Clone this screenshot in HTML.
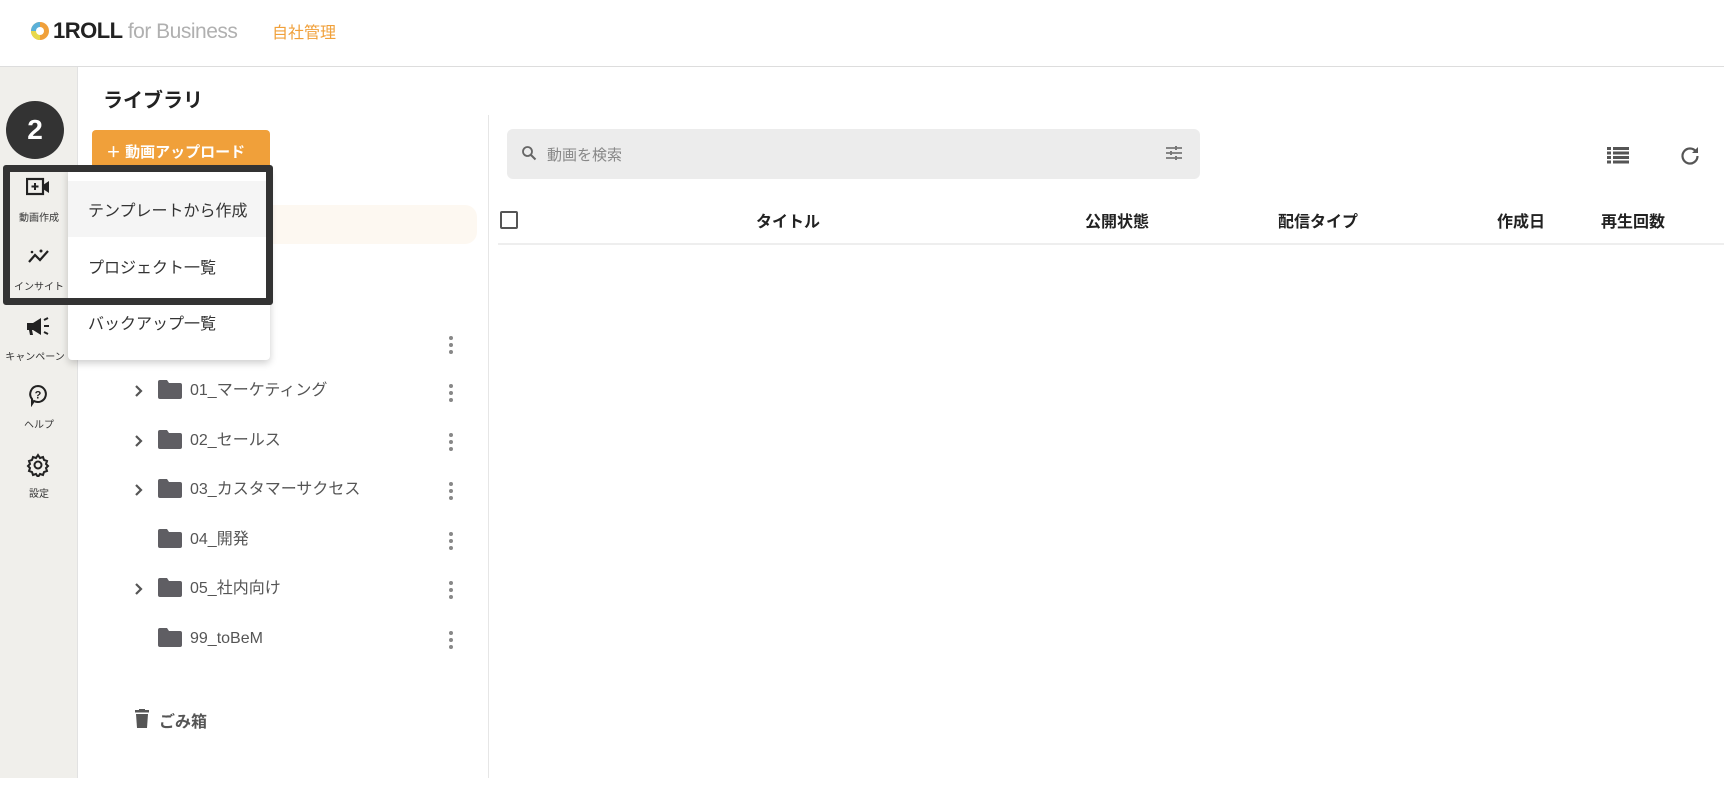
<!DOCTYPE html>
<html><head><meta charset="utf-8"><style>
*{margin:0;padding:0;box-sizing:border-box}
body{width:1724px;height:786px;background:#fff;font-family:"Liberation Sans","Noto Sans CJK JP",sans-serif;position:relative;overflow:hidden;color:#333}
.a{position:absolute}
.side{left:0;top:67px;width:78px;height:711px;background:#f0efeb;border-right:1px solid #e2e2e2}
.sl{font-size:10px;color:#333;width:78px;text-align:center;left:0}
.fold{left:158px;width:24px;height:19px}
.ft{left:190px;font-size:16px;color:#555;line-height:20px;margin-top:2px}
.keb{left:449px;width:4px}
.keb i{display:block;width:4px;height:4px;border-radius:2px;background:#888;margin-bottom:3px}
.th{top:208px;font-size:16px;font-weight:bold;color:#222}
</style></head><body>
<div class="a" style="left:0;top:66px;width:1724px;height:1px;background:#ddd"></div>
<svg class="a" style="left:30px;top:21px" width="20" height="20" viewBox="0 0 20 20"><circle cx="10" cy="10" r="9" fill="#f0a03a"/><path d="M10 1a9 9 0 0 0-9 9h9z" fill="#5ab0d8"/><path d="M1 10a9 9 0 0 0 9 9v-9z" fill="#e8d84a"/><circle cx="10" cy="10" r="4" fill="#fff"/></svg>
<div class="a" style="left:53px;top:18px;font-size:22px;font-weight:bold;color:#222;letter-spacing:-0.5px">1ROLL <span style="font-weight:normal;color:#b0b0b0;font-size:21px">for Business</span></div>
<div class="a" style="left:272px;top:19px;font-size:16px;color:#f0a03a">自社管理</div>
<div class="a side"></div>
<svg class="a" style="left:26px;top:177px" width="24" height="20" viewBox="0 0 24 20"><rect x="1" y="2" width="16" height="15" fill="none" stroke="#222" stroke-width="2.2"/><path d="M17 8l6-4v12l-6-4z" fill="#222"/><path d="M9 6v7M5.5 9.5h7" stroke="#222" stroke-width="2"/></svg>
<div class="a sl" style="top:209px">動画作成</div>
<svg class="a" style="left:27px;top:247px" width="24" height="18" viewBox="0 0 24 18"><path d="M2 15l6-7 5 5 8-9" fill="none" stroke="#222" stroke-width="2.2"/><circle cx="14" cy="4" r="1.5" fill="#222"/><circle cx="5" cy="5" r="1.3" fill="#222"/></svg>
<div class="a sl" style="top:278px">インサイト</div>
<svg class="a" style="left:25px;top:316px" width="26" height="22" viewBox="0 0 26 22"><path d="M2 7h6l8-5v17l-8-5H7l1 5H5l-1-5H2z" fill="#222"/><path d="M19 10h5M19 4l4-2M19 16l4 2" stroke="#222" stroke-width="2"/></svg>
<div class="a sl" style="top:348px;left:-4px">キャンペーン</div>
<svg class="a" style="left:26px;top:383px" width="24" height="24" viewBox="0 0 24 24"><path d="M12 3a8 8 0 1 1-4 15l-2 3v-5A8 8 0 0 1 12 3z" fill="none" stroke="#222" stroke-width="2"/><text x="12" y="15.5" font-size="11" font-weight="bold" text-anchor="middle" fill="#222" font-family="Liberation Sans">?</text></svg>
<div class="a sl" style="top:416px">ヘルプ</div>
<svg class="a" style="left:26px;top:453px" width="24" height="24" viewBox="0 0 24 24"><path d="M12 2l2 3 3-1 1 3 3 1-1 3 2 2-2 2 1 3-3 1-1 3-3-1-2 3-2-3-3 1-1-3-3-1 1-3-2-2 2-2-1-3 3-1 1-3 3 1z" fill="none" stroke="#222" stroke-width="2"/><circle cx="12" cy="12" r="3.5" fill="none" stroke="#222" stroke-width="2"/></svg>
<div class="a sl" style="top:485px">設定</div>
<div class="a" style="left:103px;top:84px;font-size:20px;font-weight:bold;color:#222">ライブラリ</div>
<div class="a" style="left:488px;top:115px;width:1px;height:663px;background:#e6e6e6"></div>
<div class="a" style="left:92px;top:130px;width:178px;height:44px;background:#f0a03a;border-radius:4px;color:#fff;font-size:15px;font-weight:bold;padding:11px 0 0 14px">＋ 動画アップロード</div>
<div class="a" style="left:78px;top:205px;width:399px;height:39px;background:#fdf8f1;border-radius:12px"></div>
<div class="a keb" style="top:336px"><i></i><i></i><i></i></div>

<svg class="a" style="left:134px;top:384px" width="10" height="14" viewBox="0 0 10 14"><path d="M2 2l5 5-5 5" fill="none" stroke="#555" stroke-width="2.2"/></svg>
<svg class="a fold" style="top:380px" viewBox="0 0 24 19"><path d="M0 2a2 2 0 0 1 2-2h7l2 3h11a2 2 0 0 1 2 2v12a2 2 0 0 1-2 2H2a2 2 0 0 1-2-2z" fill="#5f5e63"/></svg>
<div class="a ft" style="top:379px">01_マーケティング</div>
<div class="a keb" style="top:384px"><i></i><i></i><i></i></div>

<svg class="a" style="left:134px;top:434px" width="10" height="14" viewBox="0 0 10 14"><path d="M2 2l5 5-5 5" fill="none" stroke="#555" stroke-width="2.2"/></svg>
<svg class="a fold" style="top:430px" viewBox="0 0 24 19"><path d="M0 2a2 2 0 0 1 2-2h7l2 3h11a2 2 0 0 1 2 2v12a2 2 0 0 1-2 2H2a2 2 0 0 1-2-2z" fill="#5f5e63"/></svg>
<div class="a ft" style="top:429px">02_セールス</div>
<div class="a keb" style="top:433px"><i></i><i></i><i></i></div>

<svg class="a" style="left:134px;top:483px" width="10" height="14" viewBox="0 0 10 14"><path d="M2 2l5 5-5 5" fill="none" stroke="#555" stroke-width="2.2"/></svg>
<svg class="a fold" style="top:479px" viewBox="0 0 24 19"><path d="M0 2a2 2 0 0 1 2-2h7l2 3h11a2 2 0 0 1 2 2v12a2 2 0 0 1-2 2H2a2 2 0 0 1-2-2z" fill="#5f5e63"/></svg>
<div class="a ft" style="top:478px">03_カスタマーサクセス</div>
<div class="a keb" style="top:482px"><i></i><i></i><i></i></div>

<svg class="a fold" style="top:529px" viewBox="0 0 24 19"><path d="M0 2a2 2 0 0 1 2-2h7l2 3h11a2 2 0 0 1 2 2v12a2 2 0 0 1-2 2H2a2 2 0 0 1-2-2z" fill="#5f5e63"/></svg>
<div class="a ft" style="top:528px">04_開発</div>
<div class="a keb" style="top:532px"><i></i><i></i><i></i></div>

<svg class="a" style="left:134px;top:582px" width="10" height="14" viewBox="0 0 10 14"><path d="M2 2l5 5-5 5" fill="none" stroke="#555" stroke-width="2.2"/></svg>
<svg class="a fold" style="top:578px" viewBox="0 0 24 19"><path d="M0 2a2 2 0 0 1 2-2h7l2 3h11a2 2 0 0 1 2 2v12a2 2 0 0 1-2 2H2a2 2 0 0 1-2-2z" fill="#5f5e63"/></svg>
<div class="a ft" style="top:577px">05_社内向け</div>
<div class="a keb" style="top:581px"><i></i><i></i><i></i></div>

<svg class="a fold" style="top:628px" viewBox="0 0 24 19"><path d="M0 2a2 2 0 0 1 2-2h7l2 3h11a2 2 0 0 1 2 2v12a2 2 0 0 1-2 2H2a2 2 0 0 1-2-2z" fill="#5f5e63"/></svg>
<div class="a ft" style="top:627px">99_toBeM</div>
<div class="a keb" style="top:631px"><i></i><i></i><i></i></div>

<svg class="a" style="left:134px;top:709px" width="16" height="20" viewBox="0 0 16 20"><rect x="1" y="1" width="14" height="2.5" fill="#555"/><rect x="5" y="0" width="6" height="2" fill="#555"/><path d="M2 5h12l-1 14H3z" fill="#555"/></svg>
<div class="a" style="left:159px;top:708px;font-size:16px;font-weight:bold;color:#555">ごみ箱</div>
<div class="a" style="left:507px;top:129px;width:693px;height:50px;background:#ececec;border-radius:6px"></div>
<svg class="a" style="left:521px;top:145px" width="16" height="16" viewBox="0 0 16 16"><circle cx="6.5" cy="6.5" r="4.5" fill="none" stroke="#666" stroke-width="1.8"/><path d="M10 10l4.5 4.5" stroke="#666" stroke-width="2"/></svg>
<div class="a" style="left:547px;top:144px;font-size:15px;color:#888">動画を検索</div>
<svg class="a" style="left:1165px;top:145px" width="18" height="16" viewBox="0 0 18 16"><path d="M1 3h16M1 8h16M1 13h16" stroke="#777" stroke-width="1.8"/><path d="M11 1v4M6 6v4M11 11v4" stroke="#777" stroke-width="2"/></svg>
<svg class="a" style="left:1607px;top:147px" width="22" height="17" viewBox="0 0 22 17"><path d="M0 1.5h4M6 1.5h16M0 6h4M6 6h16M0 10.5h4M6 10.5h16M0 15h4M6 15h16" stroke="#555" stroke-width="3"/></svg>
<svg class="a" style="left:1679px;top:145px" width="22" height="22" viewBox="0 0 22 22"><path d="M17 6.5A7.5 7.5 0 1 0 18.5 11" fill="none" stroke="#555" stroke-width="2.2"/><path d="M19 2v6h-6z" fill="#555"/></svg>
<div class="a" style="left:500px;top:211px;width:18px;height:18px;border:2px solid #555;border-radius:2px"></div>
<div class="a th" style="left:756px">タイトル</div>
<div class="a th" style="left:1085px">公開状態</div>
<div class="a th" style="left:1278px">配信タイプ</div>
<div class="a th" style="left:1497px">作成日</div>
<div class="a th" style="left:1601px">再生回数</div>
<div class="a" style="left:498px;top:243px;width:1226px;height:2px;background:#eee"></div>
<div class="a" style="left:68px;top:168px;width:202px;height:192px;background:#fff;border-radius:4px;box-shadow:0 3px 8px rgba(0,0,0,.2)"></div>
<div class="a" style="left:68px;top:181px;width:202px;height:56px;background:#f5f5f5"></div>
<div class="a" style="left:88px;top:197px;font-size:16px;color:#333">テンプレートから作成</div>
<div class="a" style="left:88px;top:254px;font-size:16px;color:#333">プロジェクト一覧</div>
<div class="a" style="left:88px;top:310px;font-size:16px;color:#333">バックアップ一覧</div>
<div class="a" style="left:3px;top:165px;width:270px;height:140px;border:7px solid #333;border-radius:3px"></div>
<div class="a" style="left:6px;top:101px;width:58px;height:58px;border-radius:50%;background:#333;color:#fff;font-size:28px;font-weight:bold;text-align:center;line-height:58px">2</div>
</body></html>
